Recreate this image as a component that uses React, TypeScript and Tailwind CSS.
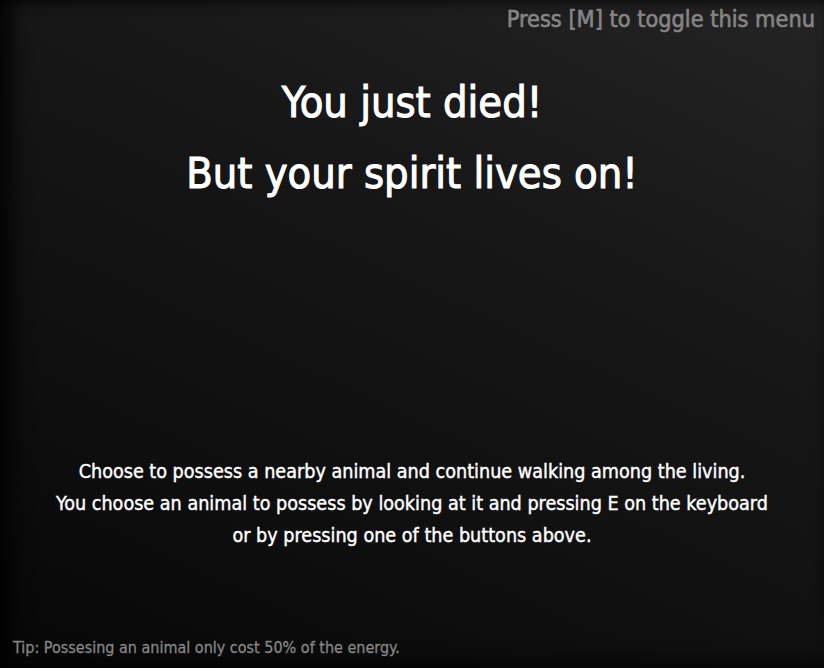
export default function App() {
  return (
    <div
      className="relative flex h-[668px] w-[824px] flex-col overflow-hidden bg-[linear-gradient(205deg,#242424_0%,#171717_35%,#101010_65%,#070707_100%)] shadow-[inset_14px_-6px_22px_-4px_rgba(0,0,0,0.9),inset_0_6px_14px_-6px_rgba(0,0,0,0.7)]"
      style={{ fontFamily: '"DejaVu Sans Condensed", "DejaVu Sans", sans-serif' }}
    >
      <div className="flex justify-end pr-[9px] pt-[5px] text-[23.3px] leading-[28px] text-[#858585] [-webkit-text-stroke:0.6px_#858585]">
        Press [M] to toggle this menu
      </div>

      <div className="mt-[34px] flex flex-col items-center text-[43px] leading-[71px] text-white [-webkit-text-stroke:1px_#fff]">
        <div>You just died!</div>
        <div>But your spirit lives on!</div>
      </div>

      <div className="mt-[247px] flex flex-col items-center text-[19.6px] leading-[32px] text-white [-webkit-text-stroke:0.4px_#fff]">
        <div>Choose to possess a nearby animal and continue walking among the living.</div>
        <div>You choose an animal to possess by looking at it and pressing E on the keyboard</div>
        <div>or by pressing one of the buttons above.</div>
      </div>

      <div className="mt-auto pb-[10px] pl-[13px] text-[16px] leading-[20px] text-[#858585] [-webkit-text-stroke:0.3px_#858585]">
        Tip: Possesing an animal only cost 50% of the energy.
      </div>
    </div>
  );
}
